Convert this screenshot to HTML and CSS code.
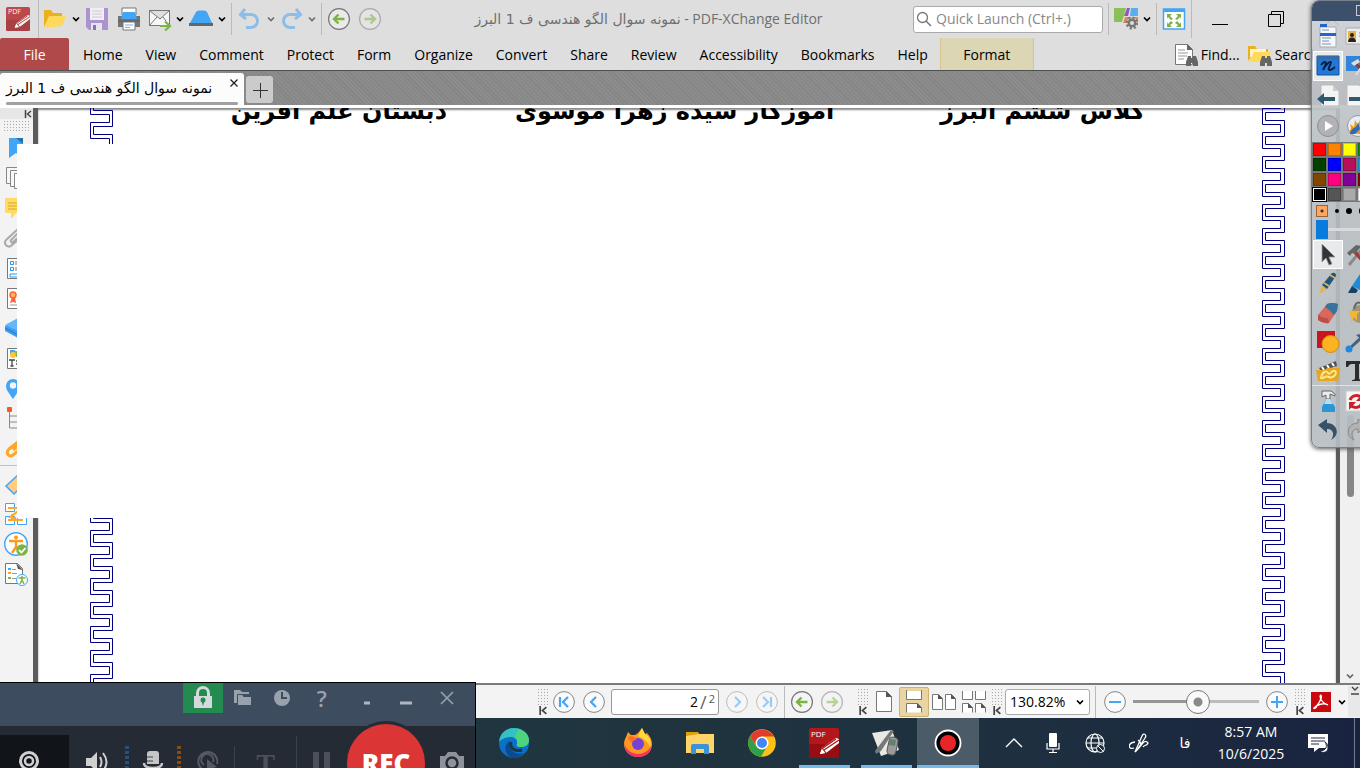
FILE: index.html
```html
<!DOCTYPE html>
<html lang="en">
<head>
<meta charset="utf-8">
<title>PDF-XChange Editor</title>
<link rel="stylesheet" href="styles.css">
</head>
<body>
<svg class="defs" aria-hidden="true">
  <defs>
    <symbol id="chev" viewBox="0 0 10 10"><path d="M2 3.500l3 3 3-3" fill="none" stroke="currentColor" stroke-width="1.700"/></symbol>
    <symbol id="circ-left" viewBox="0 0 24 24"><circle cx="12" cy="12" r="10.400" fill="#f6f6f6" fill-opacity=".5" stroke="#777" stroke-width="1.200"/><path d="M17.500 12H7.500M11.500 7.500L7 12l4.500 4.500" fill="none" stroke="#7cb342" stroke-width="2.400"/></symbol>
    <symbol id="circ-right" viewBox="0 0 24 24"><circle cx="12" cy="12" r="10.400" fill="#f6f6f6" fill-opacity=".5" stroke="#777" stroke-width="1.200"/><path d="M6.500 12h10M12.500 7.500L17 12l-4.500 4.500" fill="none" stroke="#7cb342" stroke-width="2.400"/></symbol>
    <symbol id="bino" viewBox="0 0 12 12"><path d="M2 1h3v2h2V1h3l2 6v4H7V8H5v3H0V7z" fill="#666"/></symbol>
    <symbol id="collapse" viewBox="0 0 8 8"><path d="M1.500 0v8M7 1L3.500 4 7 7" fill="none" stroke="#444" stroke-width="1.500"/></symbol>
    <symbol id="pdf" viewBox="0 0 30 30"><rect width="30" height="30" rx="2" fill="#b3161b"/><path d="M0 16h30v12a2 2 0 0 1-2 2H2a2 2 0 0 1-2-2z" fill="#82090d" opacity=".6"/><path d="M11 26l2-6L27 10l3 1v4L17 25z" fill="#fff"/><path d="M13 20l4 5M15 22l15-10M14 20l13-9" stroke="#a11" stroke-width="1.200"/><path d="M11 26l1.500-4 2.500 3z" fill="#fff"/></symbol>
    <pattern id="keyL" x="0" y="14" width="24" height="24" patternUnits="userSpaceOnUse"><path d="M19.500 0v.5H.5v16h19v8M22.500 0v4.500h-19v8h19v12" fill="none" stroke="#000080"/></pattern>
    <pattern id="keyR" x="0" y="0" width="24" height="24" patternUnits="userSpaceOnUse"><path d="M18.500 0v.5H.5v16h18v8M22.500 0v4.500h-19v8h19v12" fill="none" stroke="#000080"/></pattern>
  </defs>
</svg>

<div class="app">
  <header class="titlebar">
    <div class="tools">
      <div class="cell app-icon"><svg class="i24"><use href="#pdf"/></svg><span class="pdf-label small">PDF</span></div>
      <span class="vline full"></span>
      <button class="cell w32" aria-label="Open"><svg class="i24" viewBox="0 0 24 24"><path d="M1 20V3h7l2 3h9v4H6z" fill="#eab021"/><path d="M1 21L6 9h17l-4 10z" fill="#ffd95a"/></svg></button>
      <button class="cell w10" aria-label="Open menu"><svg class="i10"><use href="#chev"/></svg></button>
      <button class="cell w32" aria-label="Save"><svg class="i24" viewBox="0 0 24 24"><path d="M1 1h22v22H4l-3-3z" fill="#ab93cf"/><path d="M5 1h14v12H5z" fill="#f2eef7"/><path d="M6 16h11v7H6z" fill="#e8e4ee"/><path d="M8 18h3v5H8z" fill="#8a70b8"/><path d="M7 4h10M7 7h10M7 10h10" stroke="#ccc"/></svg></button>
      <button class="cell w31" aria-label="Print"><svg class="i24" viewBox="0 0 24 24"><path d="M5 1h14v7H5z" fill="#fff" stroke="#777"/><path d="M1 9h22v11H1z" fill="#737373"/><path d="M4 12L6 5h12l2 7z" fill="#42a5f5"/><path d="M1 14h22" stroke="#5c5c5c"/><path d="M6 15h12v8H6z" fill="#fff" stroke="#777"/><path d="M8 18h8M8 20.500h5" stroke="#64b5f6"/></svg></button>
      <button class="cell w31" aria-label="Mail"><svg class="i24" viewBox="0 0 24 24"><path d="M1.500 3.500h20v15h-20zM1.500 3.500L12 12 21.500 3.500M1.500 18.500L9 10M15 10l3 4" fill="#f7f7f7" stroke="#777"/><path d="M12 19h9M17 14.500l5 4.500-5 4.500" fill="none" stroke="#7cb342" stroke-width="2.200"/></svg></button>
      <button class="cell w10" aria-label="Mail menu"><svg class="i10"><use href="#chev"/></svg></button>
      <button class="cell w32" aria-label="Scan"><svg class="i24" viewBox="0 0 24 24"><path d="M1 16L7 5q1-1.500 3-1.500h5q2 0 3 1.500l5 11z" fill="#42a5f5"/><path d="M0 16h24v3H0z" fill="#666"/></svg></button>
      <button class="cell w10" aria-label="Scan menu"><svg class="i10"><use href="#chev"/></svg></button>
      <span class="vline gap4"></span>
      <button class="cell w34" aria-label="Undo"><svg class="i24" viewBox="0 0 24 24"><path d="M8 2L3.500 7.500 9 12M4 7.500h10a6 6 0 0 1 0 13H9" fill="none" stroke="#8ebde8" stroke-width="3"/></svg></button>
      <button class="cell w10 dim" aria-label="Undo menu"><svg class="i10"><use href="#chev"/></svg></button>
      <button class="cell w31" aria-label="Redo"><svg class="i24" viewBox="0 0 24 24"><path d="M16 2l4.500 5.500L15 12M20 7.500H10a6 6 0 0 0 0 13h5" fill="none" stroke="#8ebde8" stroke-width="3"/></svg></button>
      <button class="cell w10 dim" aria-label="Redo menu"><svg class="i10"><use href="#chev"/></svg></button>
      <span class="vline gap4"></span>
      <button class="cell w34" aria-label="Previous view"><svg class="i24"><use href="#circ-left"/></svg></button>
      <button class="cell w28 faded" aria-label="Next view"><svg class="i24"><use href="#circ-right"/></svg></button>
    </div>
    <h1 class="window-title"><bdi class="fa">نمونه سوال الگو هندسی ف 1 البرز</bdi> - PDF-XChange Editor</h1>
    <div class="tools">
      <label class="quick"><svg class="i18" viewBox="0 0 18 18"><circle cx="7.500" cy="7.500" r="5" fill="none" stroke="#777" stroke-width="1.300"/><path d="M11 11l5 5" stroke="#777" stroke-width="1.500"/></svg><input class="quick-input" type="text" placeholder="Quick Launch (Ctrl+.)" aria-label="Quick Launch"></label>
      <span class="vline gap5"></span>
      <button class="cell w33" aria-label="UI options"><svg class="i24" viewBox="0 0 24 24"><path d="M0 1h12l-4 14H0z" fill="#8bbf57"/><path d="M13 1h3l-2 8h-4z" fill="#8d5ac4"/><path d="M17 1h7v8h-8z" fill="#5aaef0"/><path d="M11 10h13v6H9z" fill="#ee8259"/><circle cx="18" cy="16" r="5" fill="#777" stroke="#dedede"/><circle cx="18" cy="16" r="5" fill="none" stroke="#777" stroke-width="3" stroke-dasharray="2 1.900"/><circle cx="18" cy="16" r="2" fill="#dedede"/></svg></button>
      <button class="cell w10" aria-label="UI options menu"><svg class="i10"><use href="#chev"/></svg></button>
      <span class="vline gap4"></span>
      <button class="cell w34" aria-label="Full screen"><svg class="i24" viewBox="0 0 24 24"><path d="M1.500 2h21v20h-21z" fill="#fff" stroke="#42a5f5" stroke-width="1.500"/><path d="M1 2h22v3H1z" fill="#42a5f5"/><path d="M5 7h5l-2 2 3 3-2 1-3-3-1 2zM19 7h-5l2 2-3 3 2 1 3-3 1 2zM5 20h5l-2-2 3-2-2-2-3 3-1-2zM19 20h-5l2-2-3-2 2-2 3 3 1-2z" fill="#7cb342"/></svg></button>
      <span class="vline full"></span>
      <button class="cell w56" aria-label="Minimize"><svg class="i18" viewBox="0 0 18 18"><path d="M1 14.500h16" stroke="#000"/></svg></button>
      <button class="cell w56" aria-label="Restore"><svg class="i18" viewBox="0 0 18 18"><path d="M1.500 4.500h12v12h-12zM4.500 4.500v-3h12v12h-3" fill="none" stroke="#000"/></svg></button>
      <button class="cell w56" aria-label="Close"><svg class="i18" viewBox="0 0 18 18"><path d="M2 2l14 14M16 2L2 16" stroke="#333"/></svg></button>
    </div>
  </header>

  <nav class="ribbon" aria-label="Ribbon">
    <button class="file">File</button>
    <div class="menu">
      <button class="tab">Home</button><button class="tab">View</button><button class="tab">Comment</button><button class="tab">Protect</button><button class="tab">Form</button><button class="tab">Organize</button><button class="tab">Convert</button><button class="tab">Share</button><button class="tab">Review</button><button class="tab">Accessibility</button><button class="tab">Bookmarks</button><button class="tab">Help</button>
    </div>
    <button class="format">Format</button>
    <div class="find">
      <button class="find-btn"><svg class="i24" viewBox="0 0 24 24"><path d="M1.500 1.500h12l5 5v15h-17z" fill="#fff" stroke="#777"/><path d="M13 1v6h6z" fill="#666"/><path d="M4 7h7M4 10h10M4 13h9M4 16h6" stroke="#999"/><use href="#bino" x="12" y="12" width="12" height="12"/></svg>Find...</button>
      <button class="find-btn"><svg class="i24" viewBox="0 0 24 24"><path d="M0 18V3h7l2 3h11v4H6z" fill="#eab021"/><path d="M2 6h16v8H2z" fill="#fff3c8"/><path d="M1 19l5-10h17l-4 10z" fill="#ffd95a"/><use href="#bino" x="12" y="12" width="12" height="12"/></svg>Search</button>
    </div>
  </nav>

  <div class="doctabs">
    <div class="doctab"><span class="doctab-name fa" dir="rtl">نمونه سوال الگو هندسی ف 1 البرز</span><button class="doctab-close" aria-label="Close tab"><svg class="i10" viewBox="0 0 10 10"><path d="M1.500 1.500l7 7M8.500 1.500l-7 7" stroke="#222" stroke-width="1.300"/></svg></button></div>
    <button class="newtab" aria-label="New tab"><svg class="i18" viewBox="0 0 18 18"><path d="M9.500 2v15M2 9.500h15" stroke="#333"/></svg></button>
  </div>

  <main class="work">
    <aside class="sidebar">
      <div class="side-top"><svg class="i8"><use href="#collapse"/></svg></div>
      <div class="side-grip"></div>
      <button class="side-btn" aria-label="Bookmarks"><svg class="i24" viewBox="0 0 24 24"><path d="M5 2h14v20l-7-5-7 5z" fill="#42a5f5"/><path d="M19 2v6L12 2z" fill="#2374ae"/></svg></button>
      <button class="side-btn" aria-label="Thumbnails"><svg class="i24" viewBox="0 0 24 24"><path d="M2.500 1.500h12v16h-12z" fill="#f7f7f7" stroke="#888"/><path d="M6.500 4.500h12v16h-12z" fill="#f7f7f7" stroke="#888"/><path d="M10.500 7.500h12v15h-12z" fill="#fff" stroke="#888"/></svg></button>
      <button class="side-btn" aria-label="Comments"><svg class="i24" viewBox="0 0 24 24"><path d="M1 2h22v15H12l-5 6v-6H1z" fill="#ffda65"/><path d="M4 7h16M4 10h16M4 13h16" stroke="#d6a825"/></svg></button>
      <button class="side-btn" aria-label="Attachments"><svg class="i24" viewBox="0 0 24 24"><path d="M14 3L2 14c-3 4 2 9 6 5L21 8c3-4-1-6-4-4L7 14c-1 2 1 3 2 2l8-7" fill="none" stroke="#aaa" stroke-width="2"/></svg></button>
      <button class="side-btn" aria-label="Fields"><svg class="i24" viewBox="0 0 24 24"><path d="M3.500 2.500h17v20h-17z" fill="#fff" stroke="#777"/><path d="M6.500 5.500h3v3h-3zM6.500 11.500h3v3h-3zM6 18h12v3H6z" fill="none" stroke="#2b95e8"/><path d="M11 6h6M11 8h6M11 12h6M11 14h6" stroke="#777"/></svg></button>
      <button class="side-btn" aria-label="Signatures"><svg class="i24" viewBox="0 0 24 24"><path d="M3.500 2.500h17v20h-17z" fill="#fff" stroke="#777"/><path d="M8 11l-2 6 3-1 3 1-1-6z" fill="#ff6243"/><circle cx="9" cy="9" r="3" fill="#ffb74d" stroke="#ff6243" stroke-width="1.500"/><path d="M6 19h12" stroke="#999"/></svg></button>
      <button class="side-btn" aria-label="Layers"><svg class="i24" viewBox="0 0 24 24"><path d="M1 10L14 3v19L1 15z" fill="#3b9ff3"/><path d="M1 9l13-7v13z" fill="#67b6f7"/><path d="M1 12l13 7" stroke="#1f77c4"/></svg></button>
      <button class="side-btn" aria-label="Content"><svg class="i24" viewBox="0 0 24 24"><path d="M3.500 2.500h17v20h-17z" fill="#fff" stroke="#777"/><path d="M6 4h5v5H6z" fill="#42a5f5"/><circle cx="9" cy="9" r="3" fill="#ffca28"/><path d="M11 5h6v6h-5z" fill="#7cb342"/><path d="M5 14h6M8 14v6M6.500 20h3M12 15h4M12 18h4" stroke="#444" stroke-width="1.300"/></svg></button>
      <button class="side-btn" aria-label="Destinations"><svg class="i24" viewBox="0 0 24 24"><path d="M9 23C5 17 2 14 2 10a7 7 0 0 1 14 0c0 4-3 7-7 13z" fill="#42a5f5"/><circle cx="9" cy="9.500" r="3.200" fill="#f3f3f3"/></svg></button>
      <button class="side-btn" aria-label="Structure"><svg class="i24" viewBox="0 0 24 24"><path d="M5.500 5v17H18M5.500 10H18M5.500 16H18" fill="none" stroke="#888"/><path d="M3.500 1.500h4v4h-4z" fill="#ff5722" stroke="#4a90d0"/></svg></button>
      <button class="side-btn" aria-label="Links"><svg class="i24" viewBox="0 0 24 24"><path d="M14 6L5 13c-4 4 0 9 4 6l5-4M9 14l8-7" fill="none" stroke="#ffa726" stroke-width="3"/></svg></button>
      <span class="side-line"></span>
      <button class="side-btn" aria-label="Tags"><svg class="i24" viewBox="0 0 24 24"><path d="M2 14L14 3l8 7-12 12z" fill="#ffcc80" stroke="#42a5f5" stroke-width="1.500"/></svg></button>
      <button class="side-btn" aria-label="Order"><svg class="i24" viewBox="0 0 24 24"><path d="M1.500 1.500h9v8h-9zM1.500 14.500h9v8h-9zM13.500 14.500h9v8h-9z" fill="#fff" stroke="#42a5f5"/><path d="M4 6h14L5 16M4 18h15M8 12v4h4" fill="none" stroke="#ffa726" stroke-width="2"/></svg></button>
      <button class="side-btn" aria-label="Accessibility check"><svg class="i24" viewBox="0 0 24 24"><circle cx="12" cy="12" r="11.300" fill="#fff" stroke="#42a5f5" stroke-width="1.400"/><circle cx="12" cy="5.500" r="2" fill="#fb9a1e"/><path d="M5 9h14M12 9v6l-4 6M12 14l3 5" fill="none" stroke="#fb9a1e" stroke-width="2.400"/><circle cx="18" cy="18" r="5.800" fill="#7cb342"/><path d="M15 18l2.500 2.500L21.500 16" fill="none" stroke="#fff" stroke-width="1.800"/></svg></button>
      <button class="side-btn" aria-label="Accessibility report"><svg class="i24" viewBox="0 0 24 24"><path d="M1.500 1.500h12l5 5v15h-17z" fill="#fff" stroke="#777"/><path d="M12 1l7 7-5-1z" fill="#555"/><path d="M4 6h3v2H4z" fill="#42a5f5"/><path d="M4 10h3v2H4z" fill="#ffa726"/><path d="M4 15h3v2H4z" fill="#7cb342"/><path d="M8 7.500h4M8 11.500h5M8 16.500h4" stroke="#999"/><circle cx="18" cy="18" r="5.500" fill="#fff" stroke="#42a5f5"/><path d="M14.500 16h7M18 14v4l-2 4M18 18l2 4" fill="none" stroke="#7cb342" stroke-width="1.500"/></svg></button>
    </aside>
    <section class="page">
      <svg class="key"><rect width="23" height="100%" fill="url(#keyL)"/></svg>
      <div class="page-head" dir="rtl"><span class="head-class">کلاس ششم البرز</span><span>آموزگار سیده زهرا موسوی</span><span>دبستان علم آفرین</span></div>
      <svg class="key"><rect width="23" height="100%" fill="url(#keyR)"/></svg>
    </section>
    <div class="scroll"><span class="thumb"></span><svg class="i10 scroll-down"><use href="#chev"/></svg></div>
    <div class="sheet"></div>
  </main>

  <footer class="status">
    <div class="grip"><svg class="i8"><use href="#collapse"/></svg></div>
    <button class="cell w30" aria-label="First page"><svg class="i24" viewBox="0 0 24 24"><circle cx="12" cy="12" r="10.400" fill="#fafafa" stroke="#888"/><path d="M8 7v10M16 7l-5 5 5 5" fill="none" stroke="#42a5f5" stroke-width="2.200"/></svg></button>
    <button class="cell w30" aria-label="Previous page"><svg class="i24" viewBox="0 0 24 24"><circle cx="12" cy="12" r="10.400" fill="#fafafa" stroke="#888"/><path d="M14 7l-5 5 5 5" fill="none" stroke="#42a5f5" stroke-width="2.200"/></svg></button>
    <label class="pagebox"><input class="page-input" type="text" value="2" aria-label="Page"><span class="slash">/</span><span class="total">2</span></label>
    <button class="cell w30 faded" aria-label="Next page"><svg class="i24" viewBox="0 0 24 24"><circle cx="12" cy="12" r="10.400" fill="#fafafa" stroke="#888"/><path d="M10 7l5 5-5 5" fill="none" stroke="#42a5f5" stroke-width="2.200"/></svg></button>
    <button class="cell w30 faded" aria-label="Last page"><svg class="i24" viewBox="0 0 24 24"><circle cx="12" cy="12" r="10.400" fill="#fafafa" stroke="#888"/><path d="M16 7v10M8 7l5 5-5 5" fill="none" stroke="#42a5f5" stroke-width="2.200"/></svg></button>
    <span class="vline mid"></span>
    <button class="cell w30" aria-label="Back"><svg class="i24"><use href="#circ-left"/></svg></button>
    <button class="cell w30 faded" aria-label="Forward"><svg class="i24"><use href="#circ-right"/></svg></button>
    <div class="grip wide"><svg class="i8"><use href="#collapse"/></svg></div>
    <button class="cell w30" aria-label="Single page"><svg class="i24" viewBox="0 0 24 24"><path d="M4.500 1.500h10l5 5v15h-15z" fill="#fff" stroke="#777"/><path d="M14 1v6h6z" fill="#555"/></svg></button>
    <button class="cell w30 picked" aria-label="Continuous"><svg class="i24" viewBox="0 0 24 24"><path d="M4.500 22.500v-9h11l4 4v5" fill="#fff" stroke="#777"/><path d="M4 1h16v8H4z" fill="#fff"/><path d="M4.500 0v9.500h15V0" fill="none" stroke="#777"/><path d="M15 13v5h5z" fill="#555"/></svg></button>
    <button class="cell w30" aria-label="Two pages"><svg class="i24" viewBox="0 0 24 24"><path d="M.5 4.500h6l4 4v11H.5zM13.500 4.500h6l4 4v11h-10z" fill="#fff" stroke="#777"/><path d="M6 4v5h5zM19 4v5h5z" fill="#555"/></svg></button>
    <button class="cell w30" aria-label="Two pages continuous"><svg class="i24" viewBox="0 0 24 24"><path d="M.5 1v8.500h10V1M13.500 1v8.500h10V1M.5 22.500v-9h6l4 4v5M13.500 22.500v-9h6l4 4v5" fill="#fff" stroke="#777"/><path d="M6 13v5h5zM19 13v5h5z" fill="#555"/></svg></button>
    <div class="grip apart"><svg class="i8"><use href="#collapse"/></svg></div>
    <div class="zoom-box"><select class="zoom" aria-label="Zoom"><option>130.82%</option></select><svg class="i10 zoom-arrow"><use href="#chev"/></svg></div>
    <span class="vline mid"></span>
    <button class="cell w34" aria-label="Zoom out"><svg class="i24" viewBox="0 0 24 24"><circle cx="12" cy="12" r="10.400" fill="#fafafa" stroke="#888"/><path d="M6 12h12" stroke="#42a5f5" stroke-width="2"/></svg></button>
    <input class="slider" type="range" min="0" max="100" value="52" aria-label="Zoom level">
    <button class="cell w34" aria-label="Zoom in"><svg class="i24" viewBox="0 0 24 24"><circle cx="12" cy="12" r="10.400" fill="#fafafa" stroke="#888"/><path d="M6 12h12M12 6v12" stroke="#42a5f5" stroke-width="2"/></svg></button>
    <div class="grip"><svg class="i8"><use href="#collapse"/></svg></div>
    <button class="cell w30" aria-label="Acrobat"><svg class="i20" viewBox="0 0 20 20"><rect width="20" height="20" fill="#c8090d"/><path d="M3 16c4-3 7-8 7-12M9 4c0 4 4 8 8 9M3 16c3-4 10-5 14-3M3 16c-1 1 2 1 3-2M9 4c1-2 2 0 1 3" fill="none" stroke="#fff" stroke-width="1.300"/></svg></button>
    <button class="cell w12" aria-label="Acrobat menu"><svg class="i10"><use href="#chev"/></svg></button>
    <span class="corner"><svg class="i10" viewBox="0 0 10 10"><path d="M2 1l3 3 3-3M1 8h8" fill="none" stroke="#444" stroke-width="1.400"/></svg></span>
  </footer>

  <footer class="taskbar">
    <div class="apps">
      <button class="app-btn" aria-label="Edge"><svg class="i30" viewBox="0 0 30 30"><circle cx="15" cy="15" r="15" fill="#0b71c7"/><path d="M0 14C1 5 7 0 15 0c9 0 15 6 15 12 0 5-4 7-8 7-3 0-5-1-4-3 1-4-2-7-6-7-6 0-11 3-12 5z" fill="#35c1c4"/><path d="M19 1c7 2 11 7 11 11 0 5-4 7-8 7-3 0-5-1-4-3 1-3 0-5-2-6z" fill="#55d86a" opacity=".8"/><path d="M11 13c-3 8 5 15 14 12-3 4-8 5-12 5C5 27 4 17 11 13z" fill="#0b4a91"/><path d="M12 14c-2 6 4 10 11 8" fill="none" stroke="#203640" stroke-width="3"/></svg></button>
      <span class="app-gap"></span>
      <button class="app-btn" aria-label="Firefox"><svg class="i30" viewBox="0 0 30 30"><path d="M3 9l2-5 3 3 4 0 3-2 4-5 3 6 2-1c3 3 5 7 5 11 0 8-6 13-14 13S1 23 1 16c0-3 1-5 2-7z" fill="#ff9a1f"/><path d="M1 14c1 12 20 18 28 3-1 8-7 12-14 12S1 24 1 14z" fill="#f5306b"/><path d="M19 0l3 6c5 3 7 8 5 13-2-5-6-8-12-11z" fill="#ffd83b"/><circle cx="15" cy="16" r="6" fill="#7542d3"/><path d="M5 9c4-2 7 0 9 2-2 2-5 1-5 4-2-2-4-4-4-6z" fill="#ff6b2b"/></svg></button>
      <button class="app-btn" aria-label="Files"><svg class="i30" viewBox="0 0 30 30"><path d="M1 4h12l2 3v5H1z" fill="#e0a106"/><path d="M1 8l13-2h15v19H1z" fill="#ffd467"/><path d="M6 26v-8q0-2 2-2h14q2 0 2 2v8h-5v-5h-8v5z" fill="#3a93d8"/></svg></button>
      <button class="app-btn" aria-label="Chrome"><svg class="i30" viewBox="0 0 30 30"><circle cx="15" cy="15" r="13.800" fill="#fbc116"/><path d="M3 8A14 14 0 0 1 27 8.500H15L9 18z" fill="#e33b2e"/><path d="M3 8a14 14 0 0 0 11 20.800l6-10.500-11 0z" fill="#2ba14b"/><circle cx="15" cy="15" r="6.500" fill="#fff"/><circle cx="15" cy="15" r="5" fill="#4285f4"/></svg></button>
      <button class="app-btn running" aria-label="PDF editor"><svg class="i30"><use href="#pdf"/></svg><span class="pdf-label">PDF</span></button>
      <button class="app-btn running" aria-label="Whiteboard"><svg class="i30" viewBox="0 0 30 30"><path d="M1 5l20-3 7 20-18 6z" fill="#e9e9e4"/><path d="M4 23L20 2l3 1-13 20-5 3z" fill="#777"/><rect x="17" y="9" width="9" height="18" rx="4" fill="#9a9a98" stroke="#555" transform="rotate(12 21 18)"/><path d="M19 11l6 1-1 6-6-1z" fill="#63816e"/></svg></button>
      <button class="app-btn running active" aria-label="Recorder"><svg class="i30" viewBox="0 0 30 30"><circle cx="15" cy="15" r="12.500" fill="#000" stroke="#fff" stroke-width="1.800"/><circle cx="15" cy="15" r="8" fill="#e8262a"/></svg></button>
    </div>
    <div class="tray">
      <button class="cell w36" aria-label="Show hidden icons"><svg class="i20" viewBox="0 0 20 20"><path d="M2 14l8-8 8 8" fill="none" stroke="#fff" stroke-width="1.300"/></svg></button>
      <button class="cell w42" aria-label="Microphone"><svg class="i20" viewBox="0 0 20 20"><rect x="6" y="0" width="8" height="14" rx="1" fill="#fff"/><path d="M4 10v6h12v-6M10 16v4M6 19.500h8" fill="none" stroke="#fff" stroke-width="1.200"/></svg></button>
      <button class="cell w42" aria-label="Network"><svg class="i20" viewBox="0 0 20 20"><g fill="none" stroke="#fff" stroke-width="1.200"><circle cx="10" cy="10" r="9"/><ellipse cx="10" cy="10" rx="4" ry="9"/><path d="M1 10h18M2.500 5h15M2.500 15h9"/></g><circle cx="15.500" cy="15.500" r="4" fill="#1c2c40" stroke="#fff"/><path d="M12.500 12.500l6 6" stroke="#fff"/></svg></button>
      <button class="cell w46" aria-label="Pen"><svg class="i20" viewBox="0 0 20 20"><path d="M6 19L13 3c2-4 5-1 3 2L8 17zM6 9c-8 1-7 8-1 6M9 7c4 3 3 6 0 9 5-6 7-10 10-6-1 3-4 2-5 4" fill="none" stroke="#fff" stroke-width="1.300"/></svg></button>
      <button class="cell w46 fa">فا</button>
      <div class="clock"><span>8:57 AM</span><span>10/6/2025</span></div>
      <button class="cell w48" aria-label="Notifications"><svg class="i20" viewBox="0 0 20 20"><path d="M0 1h20v14h-9l-5 4v-4H0z" fill="#fff"/><path d="M3 5h14M3 8h14M3 11h8" stroke="#1c2840"/><path d="M17 9c3 4 1 9-5 9 3 3 8 1 8-3 0-3-1-5-3-6z" fill="#fff" stroke="#1c2840"/></svg></button>
      <span class="peek"></span>
    </div>
  </footer>
</div>

<section class="palette" aria-label="Drawing tools">
  <div class="pal-title"><span class="pal-box"></span></div>
  <div class="pal-grid">
    <button class="pal-btn" aria-label="Menu"><svg class="i24" viewBox="0 0 24 24"><path d="M4 3h16v20H4z" fill="#f4f6fa" stroke="#aaa"/><path d="M4 0h7v3H4zM4 9h16v3H4z" fill="#2564c8"/><path d="M6 6h7M6 14h9M6 17h7M6 20h9" stroke="#7c94b8"/></svg></button>
    <button class="pal-btn" aria-label="Profile"><svg class="i24" viewBox="0 0 24 24"><path d="M1 4h23v16H1z" fill="#eee" stroke="#aaa"/><path d="M3 7h8v11H3z" fill="#e3b04a"/><circle cx="7" cy="11" r="2" fill="#222"/><path d="M3 18c0-6 8-6 8 0z" fill="#222"/><path d="M14 9h8M14 12h8" stroke="#888"/></svg></button>
    <button class="pal-btn chosen" aria-label="Desktop ink"><svg class="i24" viewBox="0 0 24 24"><path d="M1 2h22v19H1z" fill="#2277d8" stroke="#1553a0"/><path d="M1 2h22v3H1z" fill="#3b6ba5"/><path d="M5 11c4-5 6-3 4 1l-2 4c2-5 7-9 8-8s-5 8-1 8c2 0 4-2 5-3" fill="none" stroke="#0d1c38" stroke-width="1.800"/></svg></button>
    <button class="pal-btn" aria-label="Desktop tools"><svg class="i24" viewBox="0 0 24 24"><path d="M1 2h22v15H1z" fill="#2f84dc"/><path d="M9 8l11 11" stroke="#8d3a30" stroke-width="3"/><path d="M6 9l7-4 2 3-6 4z" fill="#ddd"/><path d="M17 12l-6 9" stroke="#ddd" stroke-width="2"/></svg></button>
    <button class="pal-btn" aria-label="Previous"><svg class="i24" viewBox="0 0 24 24"><path d="M5 1h12l6 6v15H5z" fill="#f4f4f4" stroke="#bbb"/><path d="M17 1v6h6z" fill="#ccc"/><path d="M1 15l7-6v4h11v4H8v4z" fill="#2d5870"/></svg></button>
    <button class="pal-btn" aria-label="Next"><svg class="i24" viewBox="0 0 24 24"><path d="M2 1h12l6 6v15H2z" fill="#f4f4f4" stroke="#bbb"/><path d="M4 13h12v4H4z" fill="#2d5870"/></svg></button>
    <button class="pal-btn" aria-label="Play"><svg class="i24" viewBox="0 0 24 24"><circle cx="12" cy="12" r="10.500" fill="#b2b2b6" stroke="#8f8f94"/><path d="M9 7l8 5-8 5z" fill="#fff"/></svg></button>
    <button class="pal-btn" aria-label="Web"><svg class="i24" viewBox="0 0 24 24"><circle cx="13" cy="12" r="10.500" fill="#e8eef2" stroke="#999"/><path d="M4 19l2-5-1-4 4 3 1-7 3 5 3-8 2 9 5-3-7 11z" fill="#f29b16"/><path d="M5 20c1-8 7-4 8-12l2 7-5 5z" fill="#2b6cc0"/></svg></button>
  </div>
  <div class="swatches"><i class="c1"></i><i class="c2"></i><i class="c3"></i><i class="c4"></i><i class="c5"></i><i class="c6"></i><i class="c7"></i><i class="c8"></i><i class="c9"></i><i class="c10"></i><i class="c11"></i><i class="c12"></i><i class="c13"></i><i class="c14"></i><i class="c15"></i><i class="c16"></i></div>
  <div class="sizes"><span class="size-pick"></span><span class="dot d4"></span><span class="dot d6"></span><span class="dot d8"></span></div>
  <div class="opacity"><span class="op-knob"></span></div>
  <div class="pal-grid lower">
    <button class="pal-btn chosen" aria-label="Select"><svg class="i24" viewBox="0 0 24 24"><path d="M6 1l13 13-6 0 3 7-3 1-3-7-4 4z" fill="#30353b" stroke="#999" stroke-width=".8"/></svg></button>
    <button class="pal-btn" aria-label="Tools"><svg class="i24" viewBox="0 0 24 24"><path d="M4 22L17 6" stroke="#8a8a8a" stroke-width="3"/><path d="M10 9l11 13" stroke="#a33a35" stroke-width="3.500"/><path d="M2 10l9-8 6 1-3 3-4 5-3-1-2 3z" fill="#666"/></svg></button>
    <button class="pal-btn" aria-label="Pen"><svg class="i24" viewBox="0 0 24 24"><path d="M3 22l3-9 5 4z" fill="#e6b34f"/><path d="M6 13L16 1q4-1 4 3l-9 13z" fill="#22577c"/><path d="M8 11l5 3M14 3l5 3" stroke="#e6b34f" stroke-width="1.500"/></svg></button>
    <button class="pal-btn" aria-label="Highlighter"><svg class="i24" viewBox="0 0 24 24"><path d="M7 14L15 2l9 4-7 13z" fill="#2089da"/><path d="M3 21l4-7 6 4-2 3z" fill="#174063"/></svg></button>
    <button class="pal-btn" aria-label="Eraser"><svg class="i24" viewBox="0 0 24 24"><path d="M2 14L11 3q5-2 11 0l-1 7-8 12q-6 1-11-3z" fill="#d9675e"/><path d="M9 6l2-3q5-2 11 0l-1 7-3 4q-4-5-9-8z" fill="#35749b"/><path d="M2 14q5 4 10 3l1 5q-6 1-11-3z" fill="#b94f48"/></svg></button>
    <button class="pal-btn" aria-label="Fill"><svg class="i24" viewBox="0 0 24 24"><circle cx="15" cy="13" r="9" fill="#a39473"/><path d="M3 10h12l-3 3v7l-3-4-3 6v-7z" fill="#f5b62c"/><path d="M9 8c2-9 8-8 9 0" fill="none" stroke="#666" stroke-width="2"/></svg></button>
    <button class="pal-btn" aria-label="Shapes"><svg class="i24" viewBox="0 0 24 24"><path d="M1 1h18v17H1z" fill="#c9161c"/><circle cx="14.500" cy="14" r="8.500" fill="#fbb321" stroke="#d78b0b"/></svg></button>
    <button class="pal-btn" aria-label="Connector"><svg class="i24" viewBox="0 0 24 24"><path d="M4 19L17 7" stroke="#41647c" stroke-width="3"/><path d="M11 5l11-3-2 11z" fill="#41647c"/><circle cx="4" cy="19" r="3.500" fill="#1e88e5"/></svg></button>
    <button class="pal-btn" aria-label="Media"><svg class="i24" viewBox="0 0 24 24"><path d="M3 9L20 2l1 5-16 5z" fill="#555"/><path d="M6 8l2 3M11 6l2 3M16 4l2 3" stroke="#fff" stroke-width="2"/><path d="M0 11h9l2-2h13l-2 13H2z" fill="#e7a522"/><path d="M5 19c1-6 5-8 7-5s4-4 7-2-2 8-6 6-5 2-8 1z" fill="none" stroke="#fbe98b" stroke-width="2"/></svg></button>
    <button class="pal-btn" aria-label="Text"><svg class="i24" viewBox="0 0 24 24"><path d="M1 2h22v6h-2q-1-3-4-3h-3v14q0 2 3 2v1H7v-1q3 0 3-2V5H7Q4 5 3 8H1z" fill="#2b2b2b"/></svg></button>
  </div>
  <div class="pal-grid last">
    <button class="pal-btn" aria-label="Clean"><svg class="i24" viewBox="0 0 24 24"><path d="M6 2h9l4 3v2l-5-2v5h-4V6L6 8z" fill="#ececec" stroke="#666"/><path d="M10 10h4l5 8v5H6v-5z" fill="#2b95d6"/><path d="M10 10h4l3 5H8z" fill="#b9dcee"/></svg></button>
    <button class="pal-btn" aria-label="Reset"><svg class="i24" viewBox="0 0 24 24"><path d="M1 2h20v20H1z" fill="#f6f6f6" stroke="#ccc"/><path d="M5 11c2-5 8-6 12-2M17 14c-2 5-8 6-12 2" fill="none" stroke="#cf1f26" stroke-width="3"/><path d="M18 4v8h-7zM4 21v-8h7z" fill="#cf1f26"/></svg></button>
    <button class="pal-btn" aria-label="Undo ink"><svg class="i24" viewBox="0 0 24 24"><path d="M2 7l9-6v4c10 0 14 12 4 17 4-6 2-11-4-11v4z" fill="#375267"/></svg></button>
    <button class="pal-btn" aria-label="Redo ink"><svg class="i24" viewBox="0 0 24 24"><path d="M22 7l-9-6v4C3 5-1 17 9 22c-4-6-2-11 4-11v4z" fill="#b3b3b3" stroke="#888"/></svg></button>
  </div>
</section>

<section class="recorder" aria-label="Recorder">
  <div class="rec-head">
    <button class="rec-lock" aria-label="Lock"><svg class="i24" viewBox="0 0 24 24"><path d="M6.500 11V7a5.500 5.500 0 0 1 11 0v4" fill="none" stroke="#d5d8dc" stroke-width="3"/><path d="M3 10h18v12H3z" fill="#d5d8dc"/><circle cx="12" cy="14" r="2.500" fill="#238b50"/><path d="M10.500 15h3l-1.500 5z" fill="#238b50"/></svg></button>
    <button class="rec-h" aria-label="Folder"><svg class="i20" viewBox="0 0 20 20"><path d="M1 15V2h6l2 2h7v2H5v9z" fill="#99a1ad"/><path d="M4.500 6.500h5l1 2h8v9h-14z" fill="#99a1ad" stroke="#3e4c60"/></svg></button>
    <button class="rec-h" aria-label="Schedule"><svg class="i20" viewBox="0 0 20 20"><circle cx="10" cy="10" r="8" fill="#99a1ad"/><path d="M10 4v6h5" fill="none" stroke="#3e4c60" stroke-width="2"/></svg></button>
    <button class="rec-h help" aria-label="Help">?</button>
    <button class="rec-h compact-btn" aria-label="Compact"><svg class="i20" viewBox="0 0 20 20"><path d="M7 15h6" stroke="#b0b6bf" stroke-width="3"/></svg></button>
    <button class="rec-h min-btn" aria-label="Minimize"><svg class="i20" viewBox="0 0 20 20"><path d="M4 15h12" stroke="#b0b6bf" stroke-width="3"/></svg></button>
    <button class="rec-h close-btn" aria-label="Close"><svg class="i20" viewBox="0 0 20 20"><path d="M4 4l12 12M16 4L4 16" stroke="#99a1ad" stroke-width="1.600"/></svg></button>
  </div>
  <div class="rec-body">
    <button class="rec-cam" aria-label="Webcam"><svg class="i24" viewBox="0 0 24 24"><circle cx="10" cy="11" r="8.500" fill="none" stroke="#d0d0d0" stroke-width="3"/><circle cx="10" cy="11" r="4" fill="none" stroke="#d0d0d0" stroke-width="2.500"/></svg></button>
    <button class="rec-b w56" aria-label="Speaker"><svg class="i24" viewBox="0 0 24 24"><path d="M1 9h5l6-6v20l-6-6H1z" fill="#d0d0d0"/><path d="M15 8q3 5 0 10M18 4q7 9 0 18" fill="none" stroke="#d0d0d0" stroke-width="2"/></svg></button>
    <span class="meter m-blue"></span>
    <button class="rec-b w48" aria-label="Microphone"><svg class="i24" viewBox="0 0 24 24"><path d="M6 5q0-3 3-3h6q3 0 3 3v10H6z" fill="#c6c6c8"/><path d="M6 8h6M6 12h6" stroke="#444"/><path d="M3 14q0 5 9 5t9-5M12 18v5" fill="none" stroke="#c6c6c8" stroke-width="2.400"/></svg></button>
    <span class="meter m-orange"></span>
    <button class="rec-b w53" aria-label="Cursor"><svg class="i24" viewBox="0 0 24 24"><path d="M6 20A9.500 9.500 0 1 1 21 15M8 16a6 6 0 1 1 9-3" fill="none" stroke="#555a62" stroke-width="2"/><path d="M11 10l10 8-4 1 2 4h-3l-3-3-2 2z" fill="#555a62"/></svg></button>
    <span class="rec-line"></span>
    <button class="rec-b w61 rec-t" aria-label="Text">T</button>
    <span class="rec-line tall"></span>
    <button class="rec-b w50" aria-label="Pause"><svg class="i24" viewBox="0 0 24 24"><path d="M3 3h6v21H3zM14 3h6v21h-6z" fill="#4b5059"/></svg></button>
    <button class="rec-go">REC</button>
    <button class="rec-b w53" aria-label="Screenshot"><svg class="i24" viewBox="0 0 24 24"><path d="M0 7h5l3-4h8l3 4h5v17H0z" fill="#8e939a"/><circle cx="12" cy="14" r="5.500" fill="none" stroke="#252b34" stroke-width="2.500"/></svg></button>
  </div>
</section>
</body>
</html>
```
FILE: styles.css
```css
* { box-sizing: border-box; }
html, body { height: 100%; }
body {
  margin: 0;
  position: relative;
  overflow: hidden;
  font: 14px/20px "Open Sans", "DejaVu Sans", sans-serif;
  color: #000;
}
button {
  appearance: none;
  border: 0;
  padding: 0;
  background: none;
  font: inherit;
  color: inherit;
}
svg { display: block; flex: none; }
.defs { position: absolute; width: 0; height: 0; }
.fa { font-family: "DejaVu Sans", sans-serif; }

.i8 { width: 8px; height: 8px; }
.i10 { width: 10px; height: 10px; }
.i18 { width: 18px; height: 18px; }
.i20 { width: 20px; height: 20px; }
.i24 { width: 24px; height: 24px; }
.i30 { width: 30px; height: 30px; }

.cell { display: flex; flex: none; align-items: center; justify-content: center; }
.w10 { width: 10px; }
.w12 { width: 12px; }
.w28 { width: 28px; }
.w30 { width: 30px; }
.w31 { width: 31px; }
.w32 { width: 32px; }
.w33 { width: 33px; }
.w34 { width: 34px; }
.w36 { width: 36px; }
.w42 { width: 42px; }
.w46 { width: 46px; }
.w48 { width: 48px; }
.w50 { width: 50px; }
.w53 { width: 53px; }
.w56 { width: 56px; }
.w61 { width: 61px; }
.dim { opacity: .5; }
.faded { opacity: .5; }

.app { display: flex; flex-direction: column; height: 100%; }

/* Title bar */
.titlebar { display: flex; height: 38px; background: #dedede; }
.tools { display: flex; align-items: center; flex: none; }
.vline { width: 1px; height: 32px; background: #bababa; }
.vline.full { height: 38px; }
.gap4 { margin-left: 4px; }
.gap5 { margin-left: 5px; }
.app-icon { position: relative; width: 38px; padding-right: 2px; opacity: .75; }
.pdf-label {
  position: absolute;
  top: 12px;
  left: 18px;
  font-size: 8px;
  line-height: 8px;
  color: #fff;
}
.pdf-label.small { top: 1px; left: 8px; font-size: 7px; }
.window-title {
  flex: 1;
  margin: 0;
  text-align: center;
  font-size: 14px;
  line-height: 38px;
  font-weight: 400;
  color: #6f6f6f;
  white-space: nowrap;
  direction: ltr;
}
.quick {
  display: flex;
  align-items: center;
  width: 190px;
  height: 27px;
  padding-left: 1px;
  background: #fff;
  border: 1px solid #aaa;
  border-radius: 3px;
}
.quick-input {
  flex: 1;
  min-width: 0;
  border: 0;
  padding: 0 3px;
  background: none;
  font: inherit;
}
.quick-input::placeholder { color: #888; opacity: 1; }

/* Ribbon */
.ribbon {
  display: flex;
  height: 32px;
  background: #dedede;
  white-space: nowrap;
}
.file {
  width: 69px;
  padding-top: 2px;
  border-radius: 2px 2px 0 0;
  background: #b0494a;
  color: #fff;
}
.menu { display: flex; gap: 1px; padding-left: 3px; }
.tab { padding: 2px 11px 0; }
.format {
  width: 94px;
  margin-left: 1px;
  padding-top: 2px;
  background: #dcd6b4;
  border: 1px solid #d6c48a;
  border-width: 0 1px;
}
.find { display: flex; gap: 8px; margin-left: auto; margin-right: 41px; }
.find-btn { display: flex; align-items: center; gap: 3px; padding-top: 2px; }

/* Document tabs */
.doctabs {
  display: flex;
  align-items: stretch;
  height: 38px;
  padding-top: 2px;
  border-top: 1px solid #4b514e;
  border-bottom: 3px solid #fff;
  background: repeating-linear-gradient(45deg, #848484 0 1px, #8c8c8c 1px 3px);
}
.doctab {
  position: relative;
  display: flex;
  align-items: center;
  width: 244px;
  padding: 0 5px 2px 6px;
  background: #fcfcfc;
  border-radius: 3px 3px 0 0;
  white-space: nowrap;
}
.doctab::after {
  content: "";
  position: absolute;
  left: 6px;
  right: 6px;
  bottom: 0;
  height: 3px;
  background: #a1a1a1;
  border-radius: 2px;
}
.doctab-name { flex: 1; text-align: left; font-size: 14px; }
.doctab-close { align-self: flex-start; padding-top: 5px; }
.newtab {
  display: flex;
  align-items: center;
  justify-content: center;
  width: 27px;
  height: 27px;
  margin: 3px 0 0 2px;
  background: #cbcbcb;
  border-radius: 3px;
}

/* Work area */
.work { position: relative; display: flex; flex: 1; min-height: 0; background: #5b5b5d; }
.sidebar { display: flex; flex-direction: column; width: 33px; background: #f3f3f3; overflow: hidden; flex: none; }
.side-top { display: flex; align-items: center; justify-content: flex-end; height: 11px; padding-right: 1px; background: #e6e6e6; flex: none; }
.side-grip {
  height: 12px;
  margin: 1px 3px;
  flex: none;
  background: radial-gradient(circle, #aaa 1px, transparent 1px) 0 0 / 3px 3px;
}
.side-btn { display: flex; align-items: center; height: 30px; padding-left: 4px; flex: none; }
.side-line { height: 1px; margin: 2px 0 3px; background: #c2c2c2; flex: none; }
.page {
  display: flex;
  flex: 1;
  margin: 0 4px 0 5px;
  padding: 0 51px 0 52px;
  background: #fff;
  box-shadow: inset 0 2px 2px #888;
  min-width: 0;
}
.key { width: 23px; height: 100%; }
.page-head {
  display: flex;
  flex: 1;
  align-items: flex-end;
  gap: 68px;
  height: 19px;
  padding: 0 117px;
  overflow: hidden;
  font: 700 24px/32px "DejaVu Sans", sans-serif;
  white-space: nowrap;
}
.head-class { margin-left: 38px; }
.scroll {
  display: flex;
  flex-direction: column;
  align-items: center;
  width: 20px;
  background: #f0f0f0;
  color: #666;
  flex: none;
}
.thumb { width: 7px; height: 82px; margin-top: 307px; border-radius: 4px; background: #868686; }
.scroll-down { margin: auto 0 2px; }
.sheet { position: absolute; top: 36px; left: 17px; width: 1200px; height: 374px; background: #fff; }

/* Status bar */
.status {
  display: flex;
  align-items: center;
  justify-content: flex-end;
  height: 35px;
  border-top: 2px solid #7a7a7e;
  background: #f3f3f3;
}
.grip {
  display: flex;
  align-items: flex-end;
  width: 12px;
  height: 27px;
  background: radial-gradient(circle, #aaa 1px, transparent 1px) 0 0 / 3px 3px;
  flex: none;
}
.grip svg { width: 12px; height: 9px; background: #f3f3f3; }
.grip.wide { margin-left: 10px; }
.grip.apart { margin-left: 2px; }
.pagebox {
  display: flex;
  align-items: center;
  width: 108px;
  height: 26px;
  margin: 0 3px 0 2px;
  padding-right: 3px;
  border: 1px solid #999;
  border-radius: 3px;
  background: #fff;
  flex: none;
}
.page-input { flex: 1; min-width: 0; border: 0; padding: 0; background: none; text-align: right; font: inherit; }
.slash { padding: 0 2px; font-size: 18px; color: #666; }
.total { padding-bottom: 5px; font-size: 11px; color: #555; }
.vline.mid { margin: 0 2px; }
.picked { height: 30px; background: #e9d5a1; border: 1px solid #c9b178; border-radius: 2px; }
.zoom-box { position: relative; margin: 0 3px 0 2px; }
.zoom {
  appearance: none;
  display: block;
  width: 85px;
  height: 26px;
  padding: 0 4px;
  border: 1px solid #aaa;
  border-radius: 3px;
  background: #fff;
  color: #000;
  font: inherit;
}
.zoom-arrow { position: absolute; top: 8px; right: 5px; pointer-events: none; }
.slider {
  appearance: none;
  width: 126px;
  height: 24px;
  margin: 0 1px;
  background: linear-gradient(90deg, #969696 50%, #bcbcbc 50%) 0 50% / 100% 3px no-repeat;
}
.slider::-webkit-slider-thumb {
  appearance: none;
  width: 24px;
  height: 24px;
  border: 1px solid #777;
  border-radius: 50%;
  background: radial-gradient(circle, #8a8a8a 4px, #fafafa 5px);
}
.corner { display: flex; align-items: flex-start; justify-content: flex-end; width: 12px; height: 31px; background: #e8e8e8; }

/* Taskbar */
.taskbar {
  display: flex;
  justify-content: space-between;
  height: 50px;
  padding-left: 483px;
  background: linear-gradient(90deg, #20363f 35%, #1e3040 75%, #19233f);
  color: #fff;
}
.apps, .tray { display: flex; }
.app-btn { position: relative; display: flex; align-items: center; justify-content: center; width: 62px; }
.app-gap { width: 62px; }
.running { background: linear-gradient(#76b9ed, #76b9ed) center bottom / 51px 3px no-repeat; }
.running.active { background-color: #4c5b68; background-size: 100% 3px; }
.clock {
  display: flex;
  flex-direction: column;
  align-items: center;
  width: 86px;
  padding-top: 3px;
  font-size: 14px;
  line-height: 22px;
}
.peek { width: 1px; margin: 0 5px 0 12px; background: #727a8b; }

/* Floating drawing palette */
.palette {
  position: absolute;
  top: 0;
  right: -12px;
  width: 61px;
  height: 448px;
  border: 1px solid #77818c;
  border-radius: 8px;
  background: linear-gradient(#d0d3d7dd, #b7bdc2e8 35%, #b7bdc2e8);
  box-shadow: 0 1px 4px #555;
  overflow: hidden;
}
.pal-title { display: flex; justify-content: flex-end; height: 20px; padding: 4px 4px; background: #3d506b; }
.pal-box { width: 11px; height: 11px; border: 1px solid #ccd; }
.pal-grid { display: grid; grid-template-columns: 30px 28px; grid-auto-rows: 30px; padding-left: 1px; }
.pal-btn { display: flex; align-items: center; justify-content: center; }
.chosen { background: #e9eaeb; box-shadow: inset 0 0 0 1px #fff; }
.swatches {
  display: grid;
  grid-template-columns: repeat(4, 15px);
  grid-auto-rows: 15px;
  padding-top: 1px;
}
.swatches i { margin: 1px; border: 1px solid #0003; outline: 1px solid #777; }
.c1 { background: #f00; }
.c2 { background: #ff8200; }
.c3 { background: #ff0; }
.c4 { background: #090; }
.c5 { background: #004000; }
.c6 { background: #00f; }
.c7 { background: #b80f59; }
.c8 { background: #189cf0; }
.c9 { background: #834600; }
.c10 { background: #ff0080; }
.c11 { background: #82009a; }
.c12 { background: #900; }
.swatches .c13 { background: #000; border-color: #fff; outline-color: #000; }
.c14 { background: #555; }
.c15 { background: #aaa; }
.c16 { background: #fff; }
.sizes { display: flex; align-items: center; gap: 7px; height: 18px; padding-left: 4px; }
.size-pick { width: 12px; height: 12px; border: 1px solid #9d6133; background: radial-gradient(circle, #333 1px, #ffa65d 2px); }
.dot { border-radius: 50%; background: #000; }
.d4 { width: 4px; height: 4px; }
.d6 { width: 6px; height: 6px; }
.d8 { width: 8px; height: 8px; }
.opacity { display: flex; height: 20px; padding-left: 4px; background: linear-gradient(#d8dbde, #d8dbde) 12px 8px / 100% 3px no-repeat; }
.op-knob { width: 12px; height: 19px; background: #087bdc; }
.lower { grid-auto-rows: 29px; border-bottom: 1px solid #e0e2e4; }
.last { grid-auto-rows: 29px; }

/* Screen recorder */
.recorder {
  position: absolute;
  left: 0;
  bottom: 0;
  width: 476px;
  height: 86px;
  border: 1px solid #000;
  border-width: 1px 1px 0 0;
  background: #252b34;
  overflow: hidden;
}
.rec-head { display: flex; align-items: flex-start; height: 43px; padding-left: 183px; background: #3e4c60; }
.rec-lock { display: flex; align-items: center; justify-content: center; width: 41px; height: 30px; background: #238b50; }
.rec-h { display: flex; align-items: center; justify-content: center; width: 40px; height: 30px; }
.help { font-size: 22px; font-weight: 600; color: #99a1ad; }
.compact-btn { width: 52px; }
.min-btn { width: 28px; }
.close-btn { width: 56px; }
.rec-body { display: flex; align-items: flex-start; height: 42px; }
.rec-cam { display: flex; align-items: flex-start; width: 69px; height: 33px; margin-top: 9px; padding: 15px 0 0 19px; background: #11151a; flex: none; }
.rec-b { display: flex; justify-content: center; padding-top: 23px; flex: none; }
.meter { width: 4px; height: 22px; margin-top: 20px; flex: none; }
.m-blue { background: repeating-linear-gradient(#28517a 0 3px, transparent 3px 5px); }
.m-orange { background: repeating-linear-gradient(#8a4c11 0 3px, transparent 3px 5px); }
.rec-line { width: 1px; height: 22px; margin-top: 20px; background: #3b4149; flex: none; }
.rec-line.tall { height: 32px; margin-top: 10px; }
.rec-t { font: 700 28px/30px "Liberation Serif", serif; color: #4b5059; }
.rec-go {
  width: 78px;
  height: 78px;
  flex: none;
  margin-top: -2px;
  border-radius: 50%;
  background: #dc3535;
  box-shadow: 0 0 0 3px #252b34;
  font: 800 26px/78px "Open Sans", sans-serif;
  color: #fff;
}
```
